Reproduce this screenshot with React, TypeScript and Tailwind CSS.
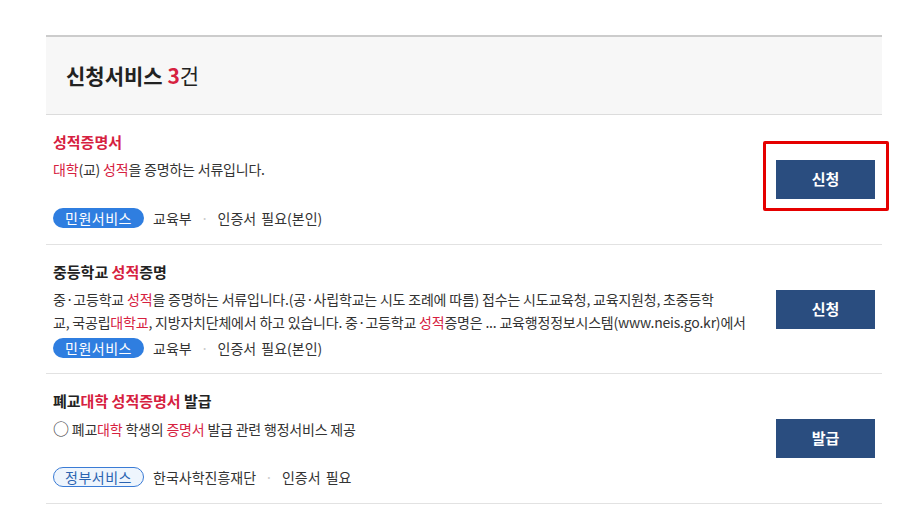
import React from "react"

const font = { fontFamily: '"Noto Sans CJK KR", "Noto Sans", sans-serif' }

function Hl({ children }: { children: React.ReactNode }) {
  return <span className="text-[#d6213f]">{children}</span>
}

type Service = {
  title: React.ReactNode
  desc: React.ReactNode
  tag: string
  gov?: boolean
  agency: string
  cert: string
  action: string
  marked?: boolean
}

const services: Service[] = [
  {
    title: <Hl>성적증명서</Hl>,
    desc: (
      <div>
        <Hl>대학</Hl>(교) <Hl>성적</Hl>을 증명하는 서류입니다.
      </div>
    ),
    tag: "민원서비스",
    agency: "교육부",
    cert: "인증서 필요(본인)",
    action: "신청",
    marked: true,
  },
  {
    title: (
      <>
        중등학교 <Hl>성적</Hl>증명
      </>
    ),
    desc: (
      <>
        <div className="whitespace-nowrap">
          중·고등학교 <Hl>성적</Hl>을 증명하는 서류입니다.(공·사립학교는 시도 조례에 따름) 접수는 시도교육청, 교육지원청, 초중등학
        </div>
        <div className="whitespace-nowrap">
          교, 국공립<Hl>대학교</Hl>, 지방자치단체에서 하고 있습니다. 중·고등학교 <Hl>성적</Hl>증명은 ... 교육행정정보시스템(www.neis.go.kr)에서
        </div>
      </>
    ),
    tag: "민원서비스",
    agency: "교육부",
    cert: "인증서 필요(본인)",
    action: "신청",
  },
  {
    title: (
      <>
        폐교<Hl>대학 성적증명서</Hl> 발급
      </>
    ),
    desc: (
      <div>
        <span className="text-[16px]">○</span> 폐교<Hl>대학</Hl> 학생의 <Hl>증명서</Hl> 발급 관련 행정서비스 제공
      </div>
    ),
    tag: "정부서비스",
    gov: true,
    agency: "한국사학진흥재단",
    cert: "인증서 필요",
    action: "발급",
  },
]

function ServiceRow({ s }: { s: Service }) {
  return (
    <li className="flex items-center border-b border-[#e2e2e2] px-[7px] pt-[16px] pb-[15.5px]">
      <div className="min-w-0 flex-1">
        <h4 className="text-[15px] leading-[22px] font-bold text-[#222]">{s.title}</h4>
        <div className="mt-[5px] min-h-[46px] overflow-hidden text-[14px] leading-[23px] tracking-[-0.2px] text-[#333]">
          {s.desc}
        </div>
        <div className="mt-[4px] flex items-center text-[14px] leading-[20px] [word-spacing:2px] text-[#333]">
          {s.gov ? (
            <span className="flex h-[20px] w-[91px] items-center justify-center rounded-full border border-[#3a7bd5] bg-[#eef5fd] text-[#2b63b0] tracking-[0.5px]">
              {s.tag}
            </span>
          ) : (
            <span className="flex h-[20px] w-[91px] items-center justify-center rounded-full bg-[#2f7ee0] text-white tracking-[0.5px]">
              {s.tag}
            </span>
          )}
          <span className="ml-[9px]">{s.agency}</span>
          <span className="mx-[9px] text-[#ccc]">·</span>
          <span>{s.cert}</span>
        </div>
      </div>
      <div className="relative ml-[24px] shrink-0">
        <button className="h-[39px] w-[99px] bg-[#2a4d7f] text-[15px] font-bold text-white">{s.action}</button>
        {s.marked && (
          <div className="pointer-events-none absolute -left-[13px] -top-[19px] h-[70px] w-[126px] rounded-[2px] border-[3px] border-[#e50000]" />
        )}
      </div>
    </li>
  )
}

export default function App() {
  return (
    <div className="min-h-[525px] bg-white pt-[35px] pl-[46px]" style={font}>
      <div className="w-[836px] border-t-2 border-[#cccccc]">
        <div className="flex h-[78px] items-center border-b border-[#dcdcdc] bg-[#f7f7f7] pl-[20px]">
          <h3 className="text-[21px] font-bold text-[#222]">
            신청서비스 <span className="text-[#d6213f]">3</span>
            <span className="font-normal">건</span>
          </h3>
        </div>
        <ul>
          {services.map((s, i) => (
            <ServiceRow key={i} s={s} />
          ))}
        </ul>
      </div>
    </div>
  )
}
